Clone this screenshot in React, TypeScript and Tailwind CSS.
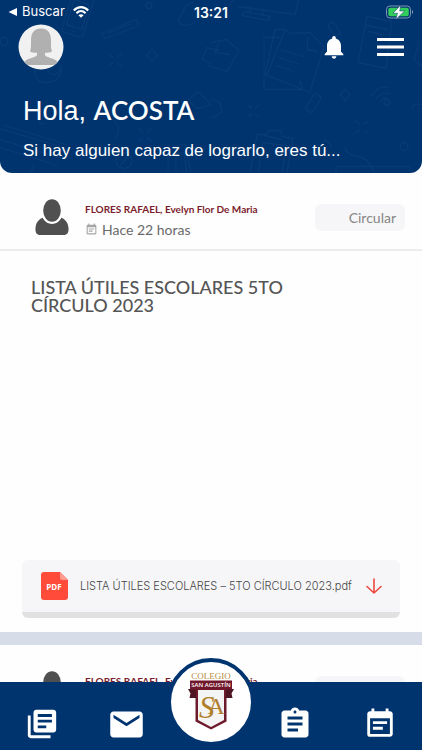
import type { ReactNode } from "react";
import {
  MdAssignment,
  MdEmail,
  MdEventNote,
  MdLibraryBooks,
  MdNotifications,
} from "react-icons/md";

type Post = {
  id: number;
  author: string;
  time: string;
  kind: string;
  title: string;
  file: string;
};

const POSTS: Post[] = [
  {
    id: 1,
    author: "FLORES RAFAEL, Evelyn Flor De Maria",
    time: "Hace 22 horas",
    kind: "Circular",
    title: "LISTA ÚTILES ESCOLARES 5TO CÍRCULO 2023",
    file: "LISTA ÚTILES ESCOLARES – 5TO CÍRCULO 2023.pdf",
  },
  {
    id: 2,
    author: "FLORES RAFAEL, Evelyn Flor De Maria",
    time: "",
    kind: "",
    title: "",
    file: "",
  },
];

// School doodles behind the greeting
function HeaderPattern() {
  return (
    <svg
      className="absolute inset-0 h-full w-full"
      viewBox="0 0 422 174"
      preserveAspectRatio="xMidYMid slice"
      fill="none"
      stroke="#164680"
      strokeOpacity="0.4"
      strokeWidth="1.3"
      aria-hidden="true"
    >
      <g transform="rotate(17 77 18)">
        <rect x="66" y="-4" width="22" height="40" rx="3" />
        <path d="M69 2h16v26H69zM76 32h3" />
      </g>
      <path d="M102 34l34-14 3 6-34 13zM107 34l25-10" />
      <circle cx="4" cy="42" r="4" />
      <circle cx="149" cy="6" r="3" />
      <path d="M178 22l8-16 8-4M178 22q8 8 17 0M147 56l5-6 5 6-5 5z" />
      <path d="M108 54l5 4m9-4l-5 4m-9 9l5-4m9 4l-5-4" />
      <path d="M38 62c-8 14 0 22 10 21s14-8 13-18M47 70c5 8 12 6 12-1" />
      <path d="M202 60l5-12 12 3M203 60l8 5M230 5l8-12M238 7l57 8 4-16M252 7l-3 6m15-4-2 8M244 12l26 5-1 4-27-5z" />
      <path d="M211 43l15-3 13 11-12 21-20-6M219 44l-4 9 15 2" />
      <path d="M284 30h-9l-10 45 45 18 14-46-14-14-18 1zM285 31l-18 44M281 50l23 7m-26 1l23 7m-25 1l18 6" />
      <path d="M264 88V38h16M308 37l-1 13 11 2" />
      <rect x="331" y="23" width="7" height="14" rx="2" transform="rotate(-35 334 30)" />
      <path d="M367 17l25 5-6 47-28-6zM366 26l22 4m-20 2l14 3M418 47l-4 14 8 5" />
      <path d="M264 85v5h38l-2-9M345 90l5 5-5 6-5-6z" />
      <rect x="309" y="94" width="8" height="19" rx="3" transform="rotate(33 313 104)" />
      <path d="M371 97q7-12 18-9m-14 12q6-8 15-6m-10 8q4-5 8-3" />
      <circle cx="387" cy="103" r="3" />
      <path d="M247 105l5 4m8-4l-5 4m-8 9l5-4m8 4l-5-4M355 121l5 4m9-4l-5 4m-9 9l5-4m9 4l-5-4" />
      <circle cx="404" cy="147" r="4" />
      <path d="M422 105q-10-2-10 5M211 100l9 3 2 10-11 6" />
      <path d="M250 173l7-38h10l2-4h12l1 6 11 2-6 34M258 173l5-30 23 3-4 27M264 136l18 4" />
      <path d="M345 148c2 10 15 7 22 13l8 12M320 148l5-8 7 7M336 174v-7h74v7" />
      <path d="M0 129l67 20-4 10L0 140M0 148l58 18M2 125l64 20M30 174l4-8" />
      <path d="M110 118q14 8 5 23M139 129l4 4m8-4l-4 4m-4 5l-4 4m8-4l4 4M45 124q-8 2-5-6M198 92l13 13-14 4-9-8z" />
      <circle cx="124" cy="161" r="8" />
      <path d="M120 166l9-10M168 173v-25l17-3 6 27M176 173v-19l8-1 3 20" />
    </svg>
  );
}

function StatusBar() {
  return (
    <div className="relative grid h-6 grid-cols-3 items-center px-2 font-['Inter',sans-serif] text-white">
      <div className="flex items-center gap-1">
        <svg className="h-2 w-2.5" viewBox="0 0 10 9" fill="currentColor" aria-hidden="true">
          <path d="M9.500 0v9L0 4.500z" />
        </svg>
        <span className="text-[13px]">Buscar</span>
        <svg className="ml-1 h-3 w-4" viewBox="0 0 16 12" fill="none" stroke="currentColor" strokeWidth="2.2" aria-hidden="true">
          <path d="M.8 4.400C5 .1 11 .1 15.200 4.400M3.500 7.200c2.700-2.700 6.300-2.700 9 0" />
          <path d="M8 11.800L5.400 9.200c1.600-1.400 3.600-1.400 5.200 0z" fill="currentColor" stroke="none" />
        </svg>
      </div>
      <p className="text-center text-[14px] font-semibold">13:21</p>
      <svg className="h-4 w-7 justify-self-end" viewBox="0 0 28 16" aria-hidden="true">
        <rect x=".5" y="2" width="24" height="12" rx="3.500" fill="none" stroke="#7d98b5" />
        <rect x="2.300" y="3.800" width="20.500" height="8.500" rx="2" fill="#32cd5b" />
        <path d="M26 6c1.500.6 1.500 3.400 0 4z" fill="#7d98b5" />
        <path d="M14.800 1L7 9.200h4.500L9.800 15.500 18.500 7h-4.800z" fill="#fff" stroke="#00346f" strokeWidth=".5" />
      </svg>
    </div>
  );
}

function ProfilePicture() {
  return (
    <svg className="h-[46px] w-[46px]" viewBox="0 0 46 46" role="img" aria-label="Perfil">
      <circle cx="23" cy="23" r="22.500" fill="#f1f1f1" />
      <path
        d="M23 4.500c-8 0-10 6-10 12 0 5 .2 8-1 11 2 1.400 5 1.300 7 1.300V31c-1.500 3-8.500 2.500-12.500 6.500 1.500 2.500 2.500 3 3.500 3.500h26c1-.5 2-1 3.500-3.500-4-4-11-3.500-12.500-6.500v-2.200c2 0 5 .1 7-1.300-1.200-3-1-6-1-11 0-6-2-12-10-12z"
        fill="#b0b0b0"
      />
    </svg>
  );
}

function AuthorIcon() {
  return (
    <svg className="h-9 w-9 shrink-0" viewBox="0 0 36 36" fill="#505050" aria-hidden="true">
      <ellipse cx="18" cy="11.500" rx="8.800" ry="11.200" />
      <path d="M8.500 18.800C4 21 2 24 1.500 29c-.3 4.500 1 7 5 7h23c4 0 5.300-2.500 5-7-.5-5-2.500-8-7-10.200C25 23 22 25 18 25s-7-2-9.500-6.200z" />
    </svg>
  );
}

function PdfIcon() {
  return (
    <svg className="h-7 w-[27px] shrink-0" viewBox="0 0 27 28" aria-hidden="true">
      <path d="M3 0h16l8 8v17a3 3 0 0 1-3 3H3a3 3 0 0 1-3-3V3a3 3 0 0 1 3-3z" fill="#ff4b3a" />
      <path d="M19 0l8 8h-6a2 2 0 0 1-2-2z" fill="#ff9b90" />
      <text x="13" y="18" fill="#fff" fontFamily="Open Sans, sans-serif" fontSize="8" fontWeight="700" textAnchor="middle">
        PDF
      </text>
    </svg>
  );
}

function SchoolLogo() {
  return (
    <svg className="h-20 w-20 shrink-0" viewBox="0 0 80 80" role="img" aria-label="Colegio San Agustín">
      <path d="M24.500 26v33.500L40 67.500l15.500-8V26z" fill="#6e1a2d" />
      <path d="M27 28v30l13 7 13-7V28z" fill="#f4f4f4" />
      <path d="M17 27h8v9h-6.500l1-4.500zM63 27h-8v9h6.500l-1-4.500z" fill="#4d1422" />
      <path d="M19 18.500h42v9H19z" fill="#71172c" />
      <text x="40" y="17" fill="#b58c42" fontFamily="Liberation Serif, serif" fontSize="9" textAnchor="middle">
        COLEGIO
      </text>
      <text x="40" y="25" fill="#fff" fontFamily="Open Sans, sans-serif" fontSize="6" fontWeight="600" textAnchor="middle">
        SAN AGUSTÍN
      </text>
      <text x="28" y="56" fill="#b07f2c" fontFamily="Liberation Serif, serif" fontSize="31" fontStyle="italic">
        S<tspan dx="-7" dy="-4" fontSize="24" fontStyle="normal">A</tspan>
      </text>
    </svg>
  );
}

function PostCard({ post }: { post: Post }) {
  return (
    <article className="border-b-[13px] border-[#d6dde8]">
      <div className="flex h-[78px] items-center border-b-2 border-[#ededee] pt-3 pr-[17px] pl-[34px]">
        <AuthorIcon />
        <div className="mt-1.5 ml-[15px] min-w-0 flex-1">
          <p className="truncate text-[10px] leading-4 font-bold text-[#7b1c2c]">{post.author}</p>
          <p className="mt-[3px] flex h-5 items-center gap-1 text-sm leading-5 text-[#696969]">
            <MdEventNote className="h-[13px] w-[13px] text-[#a5a5a5]" />
            {post.time}
          </p>
        </div>
        <span className="h-[27px] w-[90px] rounded-md bg-[#f6f6f8] pr-[9px] text-right text-sm leading-[27px] text-[#858585]">
          {post.kind}
        </span>
      </div>
      <div className="flex min-h-[381px] flex-col px-[22px] pt-[27px] pb-[14px]">
        <h2 className="max-w-72 pl-[9px] text-lg leading-[18px] font-medium text-[#555]">{post.title}</h2>
        {post.file && (
          <a
            href="#archivo"
            className="mt-auto flex h-[58px] items-center rounded-md border-b-[6px] border-[#e1e1e2] bg-[#f6f6f8] pr-[18px] pl-[19px]"
          >
            <PdfIcon />
            <span className="ml-3 min-w-0 flex-1 font-['Inter',sans-serif] text-[11px] font-light whitespace-nowrap text-[#444]">
              {post.file}
            </span>
            <svg className="h-4 w-4 shrink-0" viewBox="0 0 16 16" fill="none" stroke="#ec4a40" strokeWidth="1.600" strokeLinecap="round" strokeLinejoin="round" aria-hidden="true">
              <path d="M8 1v14M1 8.500L8 15l7-6.500" />
            </svg>
          </a>
        )}
      </div>
    </article>
  );
}

function NavButton({ label, children }: { label: string; children: ReactNode }) {
  return (
    <button aria-label={label} className="flex items-center justify-center pt-4">
      {children}
    </button>
  );
}

export default function App() {
  return (
    <div className="flex h-screen flex-col overflow-hidden bg-[#fefefe] font-['Lato',sans-serif]">
      <header className="relative shrink-0 overflow-hidden rounded-b-xl bg-[#00346f] pb-2.5 text-white">
        <HeaderPattern />
        <StatusBar />
        <div className="relative flex h-[46px] items-center px-[18px]">
          <ProfilePicture />
          <button aria-label="Notificaciones" className="ml-auto">
            <MdNotifications className="h-7 w-7" />
          </button>
          <button aria-label="Menú" className="ml-[29px]">
            <svg className="h-5 w-[27px]" viewBox="0 0 27 20" stroke="currentColor" strokeWidth="3" aria-hidden="true">
              <path d="M0 2.500h27M0 10h27M0 17.500h27" />
            </svg>
          </button>
        </div>
        <div className="relative px-[23px] pt-6">
          <h1 className="font-['Liberation_Sans',sans-serif] text-[27px] leading-8">
            Hola, <span className="font-['Lato',sans-serif] text-[26px] font-semibold">ACOSTA</span>
          </h1>
          <p className="mt-3 font-['Liberation_Sans',sans-serif] text-[17px] leading-6">
            Si hay alguien capaz de lograrlo, eres tú...
          </p>
        </div>
      </header>

      <main className="min-h-0 flex-1 overflow-hidden">
        {POSTS.map(post => (
          <PostCard key={post.id} post={post} />
        ))}
      </main>

      <nav className="grid h-[68px] shrink-0 grid-cols-5 bg-[#00346f] text-white">
        <NavButton label="Publicaciones">
          <MdLibraryBooks className="h-[34px] w-[34px]" />
        </NavButton>
        <NavButton label="Mensajes">
          <MdEmail className="h-[39px] w-[39px]" />
        </NavButton>
        <div className="relative">
          <button className="absolute -top-6 left-1/2 flex h-[88px] w-[88px] -translate-x-1/2 items-center justify-center rounded-full border-4 border-[#00346f] bg-white">
            <SchoolLogo />
          </button>
        </div>
        <NavButton label="Tareas">
          <MdAssignment className="h-9 w-9" />
        </NavButton>
        <NavButton label="Agenda">
          <MdEventNote className="h-[34px] w-[34px]" />
        </NavButton>
      </nav>
    </div>
  );
}
